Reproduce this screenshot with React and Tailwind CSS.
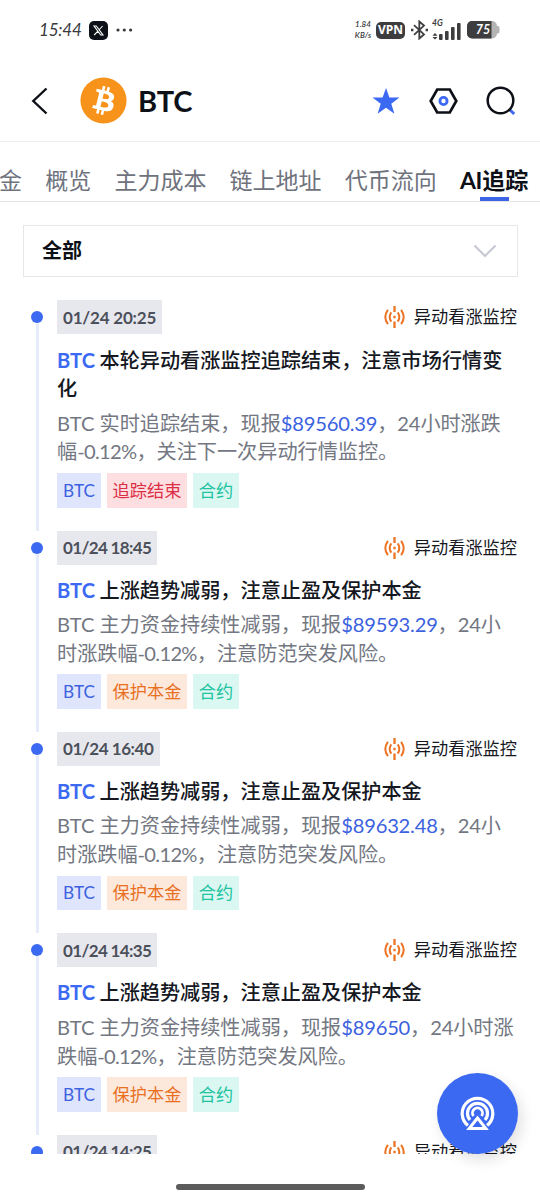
import React from "react";

const TABS = ["金", "概览", "主力成本", "链上地址", "代币流向"];

const weakening = (time, timeClass, price, first, second) => ({
  time,
  timeClass,
  title: ["上涨趋势减弱，注意止盈及保护本金"],
  lead: "主力资金持续性减弱，现报",
  price,
  after: first,
  second,
  tag: "保护本金",
  tagClass: "bg-[#fde8dc] text-[#e8701f] w-[80px]",
});

const ITEMS = [
  {
    time: "01/24 20:25",
    timeClass: "w-[105px] tracking-[-0.2px]",
    title: ["本轮异动看涨监控追踪结束，注意市场行情变", "化"],
    lead: "实时追踪结束，现报",
    price: "$89560.39",
    after: "24小时涨跌",
    second: ["幅", "关注下一次异动行情监控。"],
    tag: "追踪结束",
    tagClass: "bg-[#fddfe1] text-[#dc2f45] w-[80px]",
  },
  weakening("01/24 18:45", "w-[100px] tracking-[-0.65px]", "$89593.29", "24小", ["时涨跌幅", "注意防范突发风险。"]),
  weakening("01/24 16:40", "w-[103px] tracking-[-0.45px]", "$89632.48", "24小", ["时涨跌幅", "注意防范突发风险。"]),
  weakening("01/24 14:35", "w-[100px] tracking-[-0.65px]", "$89650", "24小时涨", ["跌幅", "注意防范突发风险。"]),
  { time: "01/24 14:25", timeClass: "w-[100px] tracking-[-0.65px]" },
];

function StatusBar() {
  return (
    <div className="flex h-[60px] shrink-0 items-center pl-[39px] pr-[40px] text-[#3a3a3c]">
      <span className="w-[42px] text-[17px] italic tracking-[-0.2px]">15:44</span>
      <svg className="ml-[8px]" width="19" height="19" viewBox="0 0 19 19">
        <rect width="19" height="19" rx="5" fill="#0d1016" />
        <path d="M5 5h2.300l6.700 9h-2.300zM13.600 5l-3.700 4M8.700 10.300 5.200 14" fill="none" stroke="#fff" strokeWidth="1.1" />
      </svg>
      <svg className="ml-[8px]" width="17" height="4" viewBox="0 0 17 4" fill="#3a3a3c">
        <circle cx="2" cy="2" r="1.6" />
        <circle cx="8.3" cy="2" r="1.6" />
        <circle cx="14.6" cy="2" r="1.6" />
      </svg>
      <div className="ml-auto flex items-center">
        <div className="w-[18px] text-center text-[8px] font-semibold italic leading-[11px]">
          <div>1.84</div>
          <div>KB/s</div>
        </div>
        <span className="ml-[4px] flex h-[17px] w-[29px] items-center justify-center rounded-[5px] bg-[#3d3d3f] font-['Open_Sans'] text-[12px] font-bold leading-none text-white">
          VPN
        </span>
        <svg className="ml-[5px]" width="19" height="20" viewBox="0 0 19 20" fill="none" stroke="#3d3d3f" strokeWidth="1.8">
          <path d="M4 5.2 14 14.4 9.3 18.5V1.5L14 5.6 4 14.8" />
          <path d="M1 10h2.4M15.6 10H18" strokeWidth="2.4" />
        </svg>
        <div className="ml-[3px] flex h-[22px] w-[29px] flex-col">
          <span className="h-[8px] text-[8.500px] font-bold italic leading-[8px]">4G</span>
          <svg className="-mt-[5px]" width="29" height="18" viewBox="0 0 29 18" fill="#3d3d3f">
            <path d="m3 11 2.6 2.7H.4zM3 17.5.4 15h5.2z" />
            <rect x="7" y="12" width="3.6" height="6" rx="1" />
            <rect x="13" y="9" width="3.6" height="9" rx="1" />
            <rect x="19" y="5" width="3.6" height="13" rx="1" />
            <rect x="25" y="1" width="3.6" height="17" rx="1" />
          </svg>
        </div>
        <svg className="ml-[6px]" width="33" height="18" viewBox="0 0 33 18">
          <rect width="30" height="17.5" rx="5" fill="#b4b4b4" />
          <path d="M30 5h1q1.5 0 1.5 2v3.500q0 2-1.500 2h-1z" fill="#b4b4b4" />
          <path d="M5 0h19.500v17.500H5a5 5 0 0 1-5-5V5a5 5 0 0 1 5-5z" fill="#3d3d3f" />
          <text x="16" y="13.200" textAnchor="middle" fontSize="12.500" fontStyle="italic" fontWeight="700" fill="#fff">
            75
          </text>
        </svg>
      </div>
    </div>
  );
}

function Header() {
  return (
    <header className="flex h-[82px] shrink-0 items-center border-b border-[#ebecef] pl-[31px] pr-[24px]">
      <svg width="17" height="28" viewBox="0 0 17 28" fill="none" stroke="#0d1016" strokeWidth="2.4">
        <path d="M15.500 1.500 2.300 14l13.200 12.500" />
      </svg>
      <svg className="ml-[32px]" width="47" height="47" viewBox="0 0 32 32">
        <circle cx="16" cy="16" r="15.700" fill="#f7931a" />
        <path
          fill="#fff"
          d="M23.189 14.020c.314-2.096-1.283-3.223-3.465-3.975l.708-2.840-1.728-.430-.690 2.765c-.454-.114-.920-.220-1.385-.326l.695-2.783L15.596 6l-.708 2.839c-.376-.086-.746-.170-1.104-.260l.002-.009-2.384-.595-.460 1.846s1.283.294 1.256.312c.700.175.826.638.805 1.006l-.806 3.235c.048.012.110.030.180.057l-.183-.045-1.130 4.532c-.086.212-.303.531-.793.410.018.025-1.256-.313-1.256-.313l-.858 1.978 2.250.561c.418.105.828.215 1.231.318l-.715 2.872 1.727.430.708-2.840c.472.127.930.245 1.378.357l-.706 2.828 1.728.430.715-2.866c2.948.558 5.164.333 6.097-2.333.752-2.146-.037-3.385-1.588-4.192 1.130-.260 1.980-1.003 2.207-2.538zm-3.950 5.538c-.533 2.147-4.148.986-5.320.695l.950-3.805c1.172.293 4.929.872 4.370 3.110zm.535-5.569c-.487 1.953-3.495.960-4.470.717l.860-3.450c.975.243 4.118.696 3.610 2.733z"
        />
      </svg>
      <h1 className="ml-[11px] text-[29px] font-bold leading-none tracking-[-0.200px] text-[#0d1016]">BTC</h1>
      <svg className="ml-auto" width="28" height="26" viewBox="0 0 28 26" fill="#3c69f2">
        <path d="m14 0 3.400 9.600H27.500l-8.200 6.100 3.100 10L14 19.700l-8.400 6 3.100-10L.5 9.600h10.100z" />
      </svg>
      <svg className="ml-[29px]" width="29" height="26" viewBox="0 0 29 26" fill="none">
        <path d="M8.200 1.500h12.600L27.300 13l-6.500 11.500H8.200L1.700 13z" stroke="#0d1016" strokeWidth="2.700" />
        <circle cx="14.500" cy="13" r="3.600" stroke="#3c69f2" strokeWidth="2.800" />
      </svg>
      <svg className="ml-[28px]" width="30" height="30" viewBox="0 0 30 30" fill="none">
        <path d="m23 23 5.200 5" stroke="#3c69f2" strokeWidth="3" />
        <circle cx="14.500" cy="14.500" r="12.800" stroke="#0d1016" strokeWidth="2.500" />
      </svg>
    </header>
  );
}

function Tabs() {
  return (
    <nav className="flex h-[60px] shrink-0 items-end gap-[23.200px] overflow-hidden whitespace-nowrap border-b border-[#e3e4e8] text-[23px] leading-[42px] text-[#6e727d]">
      {TABS.map((t) => (
        <span key={t} className={t === "金" ? "-ml-px" : ""}>
          {t}
        </span>
      ))}
      <span className="relative font-bold text-[#0d1016]">
        <span className="tracking-[-0.300px]">AI</span>追踪
        <i className="absolute bottom-0 left-[20px] h-[4px] w-[29px] bg-[#3c64e4]" />
      </span>
    </nav>
  );
}

function AlertIcon() {
  return (
    <svg width="21" height="22" viewBox="0 0 21 22" fill="none" stroke="#ec7424" strokeWidth="2">
      <path d="M10.500 0v6M10.500 15.500V22M10.500 9.700v2.600" strokeWidth="2.300" />
      <path d="M7.300 6.400q-3.200 4.600 0 9.200M13.700 6.400q3.200 4.600 0 9.200" />
      <path d="M3.900 3.800q-5.200 7.200 0 14.400M17.100 3.800q5.200 7.200 0 14.400" />
    </svg>
  );
}

function ItemBody({ item }) {
  return (
    <>
      <h2 className="mt-[11.200px] text-[20.150px] font-medium leading-[28.800px] text-[#15181f]">
        <b className="mr-[4.500px] inline-block w-[38px] font-bold text-[#3c69f2]">BTC</b>
        {item.title.map((line, i) => (
          <React.Fragment key={line}>
            {i > 0 && <br />}
            {line}
          </React.Fragment>
        ))}
      </h2>
      <p className="mt-[5.500px] text-[20.150px] leading-[28.800px] text-[#737782]">
        <span className="mr-[4.500px] inline-block w-[38px]">BTC</span>
        {item.lead}
        <span className="tracking-[-0.200px] text-[#3c62df]">{item.price}</span>
        <span className="tracking-[-0.100px]">，{item.after}</span>
        <br />
        {item.second[0]}
        <span className="tracking-[-0.700px]">-0.12%</span>，{item.second[1]}
      </p>
      <div className="mt-[6.800px] flex h-[34.700px] gap-[6px] text-[17.200px] *:flex *:items-center *:justify-center">
        <span className="w-[44px] bg-[#dfe5fc] text-[#3c62df]">BTC</span>
        <span className={item.tagClass}>{item.tag}</span>
        <span className="w-[46px] bg-[#daf7f2] text-[#22c3a0]">合约</span>
      </div>
    </>
  );
}

function Item({ item }) {
  return (
    <article className="flex shrink-0 pl-[31px] pr-[23px]">
      <div className="flex w-[12px] flex-col items-center pt-[11px]">
        <i className="size-[12px] shrink-0 rounded-full bg-[#3c69f2]" />
        <i className="w-[3px] flex-1 bg-[#e7ecfd]" />
      </div>
      <div className="ml-[14px] min-w-0 flex-1 whitespace-nowrap pb-[22.800px]">
        <div className="flex h-[34px] items-center">
          <time className={`flex h-[34px] items-center bg-[#e7e8ed] pl-[6px] text-[17px] font-bold text-[#4c505b] ${item.timeClass}`}>
            {item.time}
          </time>
          <span className="ml-auto flex items-center gap-[9px] text-[17.200px] text-[#17191f]">
            <AlertIcon />
            异动看涨监控
          </span>
        </div>
        {item.title && <ItemBody item={item} />}
      </div>
    </article>
  );
}

export default function App() {
  return (
    <div className="relative flex h-[1199px] w-[540px] flex-col overflow-hidden bg-white font-['Lato','Noto_Sans_CJK_SC',sans-serif]">
      <StatusBar />
      <Header />
      <Tabs />
      <button className="ml-[23px] mr-[22px] mt-[23px] flex h-[52px] shrink-0 items-center justify-between border border-[#e6e7eb] pl-[18px] pr-[20px] text-[20px] font-bold text-[#0d1016]">
        <span className="-mt-[2px]">全部</span>
        <svg width="24" height="14" viewBox="0 0 24 14" fill="none" stroke="#c6c8d1" strokeWidth="2">
          <path d="m1.500 1.500 10.500 10.500L22.500 1.500" />
        </svg>
      </button>
      <main className="mt-[23px] flex h-[854px] shrink-0 flex-col overflow-hidden pt-[0.400px]">
        {ITEMS.map((item) => (
          <Item key={item.time} item={item} />
        ))}
      </main>
      <footer className="flex flex-1 justify-center pt-[30px]">
        <i className="h-[6px] w-[189px] rounded-full bg-[#5b5b5b]" />
      </footer>
      <button className="absolute left-[437px] top-[1073px] flex size-[81px] items-center justify-center rounded-full bg-[#3c69f2] shadow-[4px_6px_14px_rgba(0,0,0,0.12)]">
        <svg width="35" height="35" viewBox="0 0 35 35" fill="none" stroke="#fff" strokeWidth="3.200">
          <path d="M8.300 29.800A15.300 15.300 0 1 1 26.700 29.800" />
          <path d="M10 24A10 10 0 1 1 25 24" />
          <path d="M13.500 20A5 5 0 1 1 21.500 20" strokeWidth="2.800" />
          <path d="M17.500 22.500 26.500 33.500H8.500z" stroke="#3c69f2" strokeWidth="6" />
          <path d="M17.500 22 25.800 32.500H9.200z" strokeWidth="3" fill="#3c69f2" />
        </svg>
      </button>
    </div>
  );
}
